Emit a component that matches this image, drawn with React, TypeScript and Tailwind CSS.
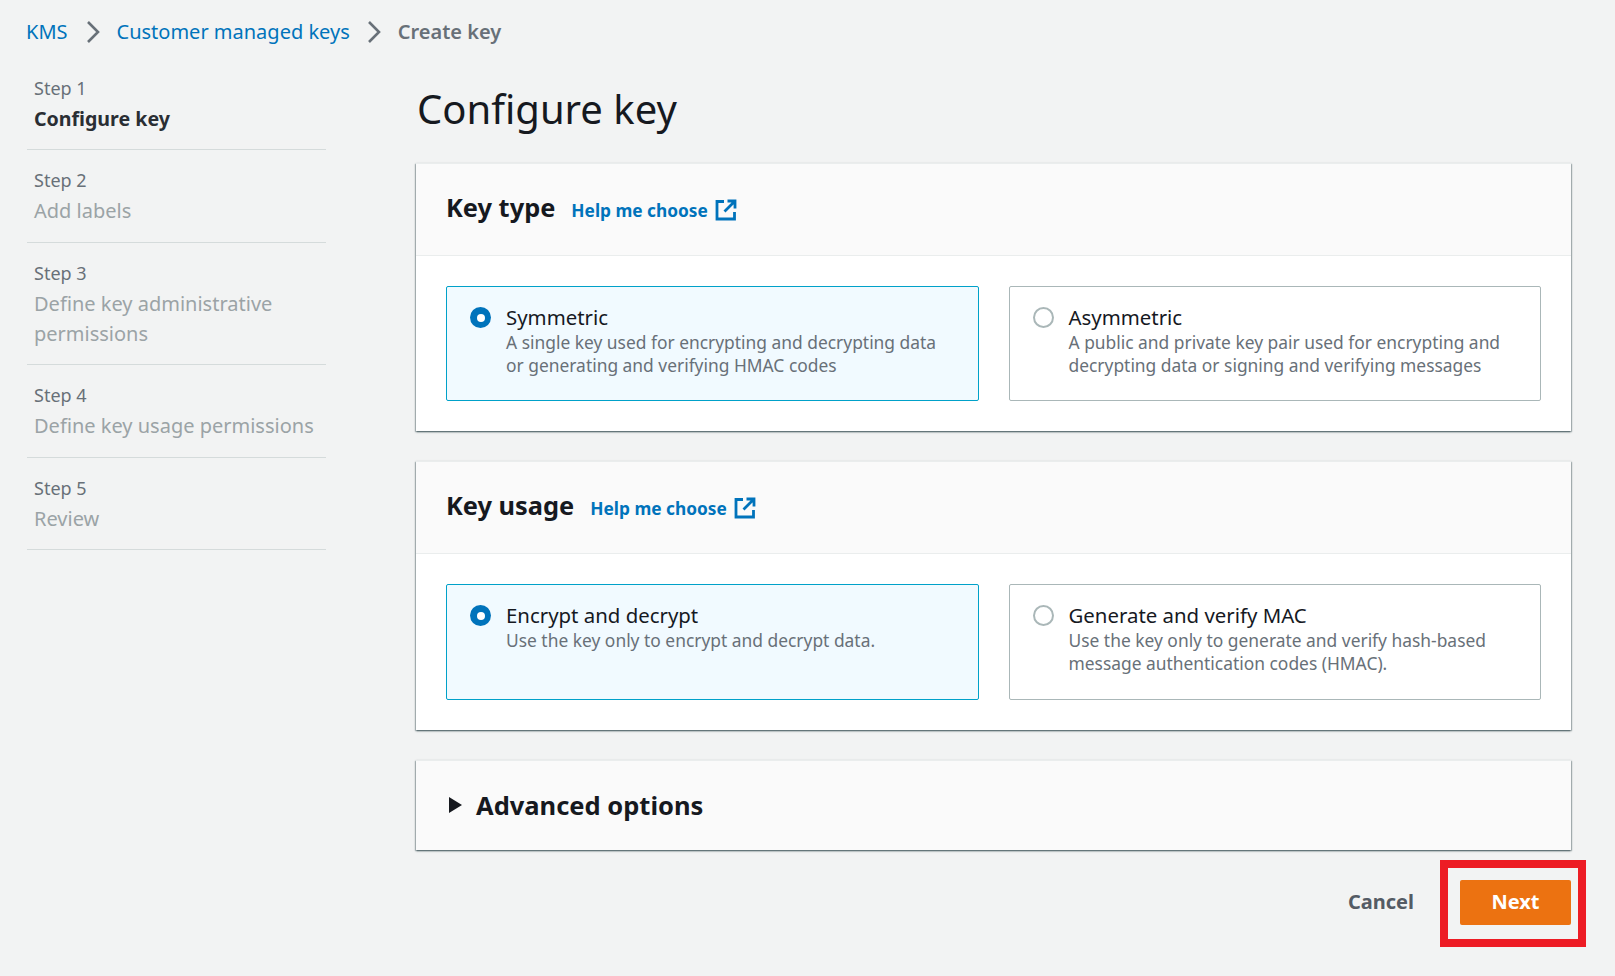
import React from "react"

const font = { fontFamily: '"Noto Sans", "Liberation Sans", sans-serif' }

const steps = [
  { step: "Step 1", label: "Configure key", active: true },
  { step: "Step 2", label: "Add labels" },
  { step: "Step 3", label: "Define key administrative permissions" },
  { step: "Step 4", label: "Define key usage permissions" },
  { step: "Step 5", label: "Review" },
]

function Chevron() {
  return (
    <svg width="16" height="24" viewBox="0 0 16 24" fill="none" className="shrink-0">
      <path d="M3 2l10 10L3 22" stroke="#687078" strokeWidth="2.6" />
    </svg>
  )
}

function ExternalIcon() {
  return (
    <svg width="22" height="22" viewBox="0 0 22 22" fill="none" className="shrink-0">
      <path d="M9 2.5H2v17.5h17.5v-7" stroke="#0073bb" strokeWidth="2.8" />
      <path d="M12.5 2h7.5v7.5M19.5 2.5L9.5 12.5" stroke="#0073bb" strokeWidth="2.8" />
    </svg>
  )
}

function OptionCard({ title, desc, selected }: { title: string; desc: React.ReactNode; selected?: boolean }) {
  return (
    <div
      className={`flex flex-1 rounded-[2px] border pl-[23px] pr-4 pt-[17px] ${
        selected ? "border-[#00a1c9] bg-[#f1faff]" : "border-[#aab7b8] bg-white"
      }`}
    >
      <div className="pt-[3px]">
        {selected ? (
          <div className="flex h-[21px] w-[21px] items-center justify-center rounded-full bg-[#0073bb]">
            <div className="h-[8px] w-[8px] rounded-full bg-white" />
          </div>
        ) : (
          <div className="h-[21px] w-[21px] rounded-full border-2 border-[#aab7b8] bg-white" />
        )}
      </div>
      <div className="ml-[15px]">
        <div className="text-[20.4px] leading-[26px] text-[#16191f]">{title}</div>
        <div className="mt-[1px] text-[17.4px] leading-[23px] text-[#687078]">{desc}</div>
      </div>
    </div>
  )
}

function Panel({ title, bodyHeight, children }: { title: string; bodyHeight: string; children: React.ReactNode }) {
  return (
    <section className="border-t border-[#eaeded] bg-white shadow-[0_1px_2px_0_rgba(0,28,36,0.5),1px_1px_1px_0_rgba(0,28,36,0.2),-1px_1px_1px_0_rgba(0,28,36,0.2)]">
      <div className="flex h-[92px] items-center border-b border-[#eaeded] bg-[#fafafa] pb-[6px] pl-[30px]">
        <h2 className="text-[25.4px] font-bold leading-[32px] text-[#16191f]">{title}</h2>
        <a className="ml-[16px] mt-[8px] text-[17.3px] font-bold text-[#0073bb]">Help me choose</a>
        <span className="ml-[7px] mt-[7px]">
          <ExternalIcon />
        </span>
      </div>
      <div className={`flex gap-[30px] px-[30px] py-[30px] ${bodyHeight}`}>{children}</div>
    </section>
  )
}

export default function App() {
  return (
    <div className="h-[976px] w-full overflow-hidden bg-[#f2f3f3]" style={font}>
      <nav className="flex h-[64px] items-center pl-[26px] text-[20px]">
        <a className="text-[#0073bb]">KMS</a>
        <span className="ml-[17px] mr-[16px]"><Chevron /></span>
        <a className="text-[#0073bb]">Customer managed keys</a>
        <span className="ml-[16px] mr-[16px]"><Chevron /></span>
        <span className="font-semibold text-[#687078]">Create key</span>
      </nav>
      <div className="flex pl-[27px]">
        <aside className="w-[299px] shrink-0 pt-[10px]">
          {steps.map((s) => (
            <div key={s.step} className="border-b border-[#d5dbdb] px-[7px] pb-[15.5px] pt-[16px] first:pb-[15px] first:pt-0">
              <div className="mb-[2px] text-[18px] leading-[28px] text-[#687078]">{s.step}</div>
              <div
                className={`leading-[30px] ${
                  s.active ? "text-[19.6px] font-bold text-[#2a2e33]" : "text-[20px] text-[#9ba3a6]"
                }`}
              >
                {s.label}
              </div>
            </div>
          ))}
        </aside>
        <main className="ml-[90px] w-[1155px] shrink-0">
          <h1 className="flex h-[99px] items-center pb-[9px] pl-[1px] text-[40px] leading-[50px] text-[#16191f]">Configure key</h1>
          <div className="flex flex-col gap-[30px]">
            <Panel title="Key type" bodyHeight="h-[175px]">
              <OptionCard
                selected
                title="Symmetric"
                desc={<>A single key used for encrypting and decrypting data<br />or generating and verifying HMAC codes</>}
              />
              <OptionCard
                title="Asymmetric"
                desc={<>A public and private key pair used for encrypting and<br />decrypting data or signing and verifying messages</>}
              />
            </Panel>
            <Panel title="Key usage" bodyHeight="h-[176px]">
              <OptionCard selected title="Encrypt and decrypt" desc="Use the key only to encrypt and decrypt data." />
              <OptionCard
                title="Generate and verify MAC"
                desc={<>Use the key only to generate and verify hash-based<br />message authentication codes (HMAC).</>}
              />
            </Panel>
            <section className="flex h-[90px] items-center border-t border-[#eaeded] bg-[#fafafa] pb-[1px] pl-[33px] shadow-[0_1px_2px_0_rgba(0,28,36,0.5),1px_1px_1px_0_rgba(0,28,36,0.2),-1px_1px_1px_0_rgba(0,28,36,0.2)]">
              <svg width="13" height="16" viewBox="0 0 13 16" className="shrink-0">
                <path d="M0 0l13 8L0 16z" fill="#16191f" />
              </svg>
              <span className="ml-[14px] text-[25.5px] font-bold text-[#16191f]">Advanced options</span>
            </section>
          </div>
          <div className="mt-[30px] flex items-center justify-end">
            <a className="mb-[2px] mr-[46px] text-[20px] font-bold text-[#545b64]">Cancel</a>
            <div className="relative">
              <button className="flex h-[45px] w-[111px] items-center justify-center rounded-[2px] bg-[#ec7211] pb-[1px] text-[20px] font-bold text-white">
                Next
              </button>
              <div className="absolute -bottom-[22px] -left-[20px] -right-[15px] -top-[20px] border-8 border-[#ed1c24]" />
            </div>
          </div>
        </main>
      </div>
    </div>
  )
}
